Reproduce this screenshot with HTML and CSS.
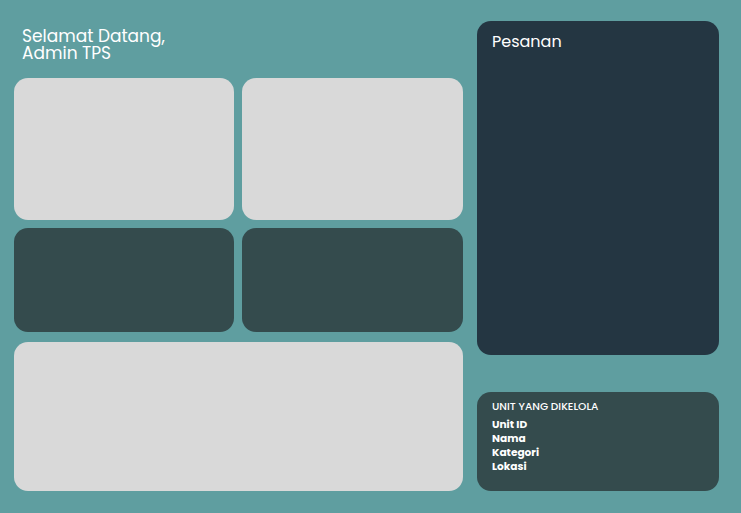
FILE: index.html
```html
<!DOCTYPE html>
<html lang="id">
<head>
<meta charset="utf-8">
<title>Dashboard Admin TPS</title>
<link rel="stylesheet" href="styles.css">
</head>
<body>
<div class="page">
  <main class="main">
    <h1 class="greeting">Selamat Datang,<br>Admin TPS</h1>
    <div class="grid">
      <div class="card light"></div>
      <div class="card light"></div>
      <div class="card dark"></div>
      <div class="card dark"></div>
    </div>
    <div class="card light wide"></div>
  </main>
  <aside class="side">
    <section class="orders">
      <h2 class="orders-title">Pesanan</h2>
    </section>
    <section class="unit">
      <h3 class="unit-title">UNIT YANG DIKELOLA</h3>
      <ul class="unit-list">
        <li>Unit ID</li>
        <li>Nama</li>
        <li>Kategori</li>
        <li>Lokasi</li>
      </ul>
    </section>
  </aside>
</div>
</body>
</html>
```
FILE: styles.css
```css
html, body {
  margin: 0;
  padding: 0;
}
body {
  background: #5f9ea0;
  font-family: Poppins, Inter, "Noto Sans", sans-serif;
  color: #ffffff;
  width: 741px;
  height: 513px;
  overflow: hidden;
}
.page {
  display: flex;
  gap: 14px;
  padding: 0 22px 0 14px;
  height: 513px;
  box-sizing: border-box;
}
.main {
  width: 449px;
  display: flex;
  flex-direction: column;
}
.greeting {
  margin: 0 0 16px;
  padding: 28px 0 0 8px;
  font-size: 17px;
  font-weight: 400;
  line-height: 17px;
  letter-spacing: 0;
}
.grid {
  display: grid;
  grid-template-columns: 220px 221px;
  grid-template-rows: 142px 104px;
  gap: 8px;
}
.card {
  border-radius: 14px;
}
.light {
  background: #d9d9d9;
}
.dark {
  background: #344b4d;
}
.wide {
  margin-top: 10px;
  height: 149px;
}
.side {
  width: 242px;
  display: flex;
  flex-direction: column;
  padding-top: 21px;
}
.orders {
  background: #243642;
  border-radius: 14px;
  height: 334px;
  padding: 12px 15px;
  box-sizing: border-box;
}
.orders-title {
  margin: 0;
  font-size: 16px;
  font-weight: 400;
  line-height: 18px;
}
.unit {
  margin-top: 37px;
  background: #344b4d;
  border-radius: 14px;
  height: 99px;
  padding: 8px 15px;
  box-sizing: border-box;
}
.unit-title {
  margin: 0 0 4px;
  font-size: 10.6px;
  font-weight: 500;
  line-height: 14px;
}
.unit-list {
  list-style: none;
  margin: 0;
  padding: 0;
  font-size: 10.6px;
  font-weight: 700;
  line-height: 14px;
}
```
